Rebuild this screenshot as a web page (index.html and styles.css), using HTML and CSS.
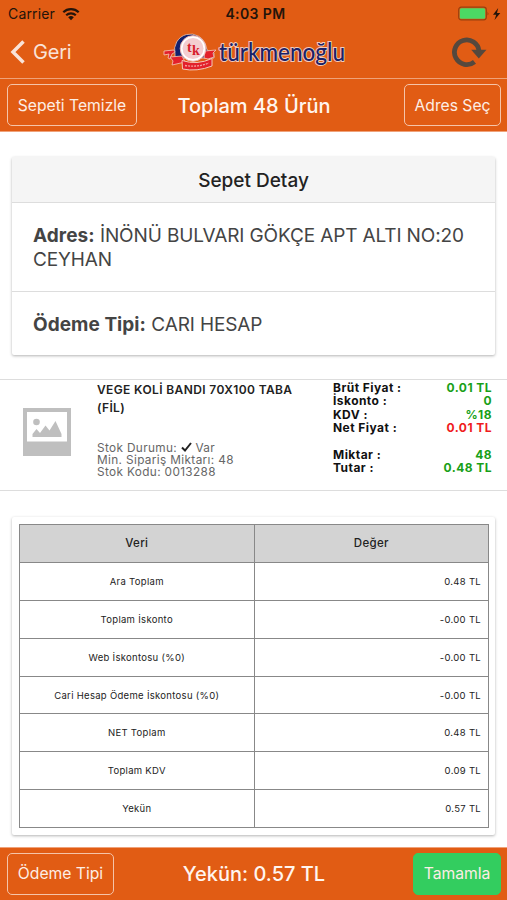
FILE: index.html
```html
<!DOCTYPE html>
<html lang="tr">
<head>
<meta charset="utf-8">
<title>Sepet Detay</title>
<link rel="stylesheet" href="styles.css">
</head>
<body>
<div class="app">
  <header class="header">
    <div class="status">
      <div class="carrier"><span>Carrier</span>
        <svg width="18" height="14" viewBox="0 0 18 14"><g fill="none" stroke="#24140a" stroke-width="2.2"><path d="M1.3 5.2a11 11 0 0 1 15.4 0"/><path d="M4.2 8.3a7 7 0 0 1 9.6 0"/></g><path d="M6.2 10.3a4.1 4.1 0 0 1 5.600 0L9 13.2z" fill="#24140a"/></svg>
      </div>
      <div class="time">4:03 PM</div>
      <div class="power">
        <svg width="44" height="16" viewBox="0 0 44 16"><rect x=".7" y="1.2" width="27.600" height="12.600" rx="2.5" fill="none" stroke="#9a400f" stroke-width="1.2"/><rect x="1.800" y="2.300" width="25.400" height="10.400" rx="1.500" fill="#4cd964"/><path d="M29.5 5.500v4q1.800-2 0-4" fill="#9a400f"/><path d="M40.2 2L35 8.700h3.2L36.5 14 42.300 7h-3.300z" fill="#24140a"/></svg>
      </div>
    </div>
    <nav class="nav">
      <div class="back"><svg width="16" height="24" viewBox="0 0 16 24"><path d="M13.500 1.500L3 12l10.500 10.500" fill="none" stroke="#f9e3d8" stroke-width="3.500"/></svg><span>Geri</span></div>
      <div class="brand">
        <svg class="logo" width="184" height="42" viewBox="0 0 184 42">
          <path d="M12 23a16 16 0 0 1 31-8l1 4 7 3v5H12z" fill="#13216d" stroke="#f2c6ae" stroke-width=".8"/>
          <path d="M1 20l10-1 1 2-3 2-2 5-2-1 1-4-5 1zM42 20l11-1-3 3 1 4-6 2-4-1z" fill="#e3202b" stroke="#f5c8b8" stroke-width=".8"/>
          <path d="M7 26l12-1 3 6-13 3 1-4z" fill="#e3202b" stroke="#f5c8b8" stroke-width=".8"/>
          <circle cx="30" cy="17.500" r="12.800" fill="#fff" stroke="#f0b6b3" stroke-width="1"/>
          <circle cx="30" cy="17.500" r="10.500" fill="#f4cdd0"/>
          <text class="mark" x="24" y="20.500">t</text><text class="mark" x="29" y="23.500">k</text>
          <path d="M19 29.500q15 5 30-2v7.500q-15 6-29.500 3z" fill="#e3202b" stroke="#f5c8b8" stroke-width="1"/>
          <path d="M22 34.500q13 2 24-2.500" fill="none" stroke="#f3a09f" stroke-width="1.300" stroke-dasharray="2 1"/>
          <text class="word" x="56" y="29.500" textLength="126" lengthAdjust="spacingAndGlyphs">türkmenoğlu</text>
        </svg>
      </div>
      <svg class="refresh" width="35" height="32" viewBox="0 0 35 32"><path d="M22.500 25.800A12.300 12.300 0 1 1 27 15" fill="none" stroke="#55483d" stroke-width="4.800"/><path d="M19.200 13.800h15.300L26.800 22.500z" fill="#55483d"/></svg>
    </nav>
    <div class="toolbar">
      <button class="btn clear">Sepeti Temizle</button>
      <h1 class="total">Toplam 48 Ürün</h1>
      <button class="btn address">Adres Seç</button>
    </div>
  </header>
  <main class="content">
    <section class="card detail">
      <h2>Sepet Detay</h2>
      <p class="line addr"><b>Adres:</b> <span>İNÖNÜ BULVARI GÖKÇE APT ALTI NO:20<br>CEYHAN</span></p>
      <p class="line pay"><b>Ödeme Tipi:</b> <span>CARI HESAP</span></p>
    </section>
    <section class="product">
      <svg class="thumb" width="48" height="48" viewBox="0 0 48 48"><path fill="#bfbfbf" fill-rule="evenodd" d="M0 0h48v48H0zM4 4v29.500h40V4z"/><circle cx="13.500" cy="14" r="3.300" fill="#bfbfbf"/><path d="M9.500 29v-3l4-5 3.500 4 5.500-7.500 4 5 6-9.500 6 13v3z" fill="#bfbfbf"/></svg>
      <div class="info">
        <h3>VEGE KOLİ BANDI 70X100 TABA<br>(FİL)</h3>
        <div class="stock">
          <div>Stok Durumu: <svg width="11" height="10" viewBox="0 0 11 10"><path d="M1 5.500l3 3L10 1" fill="none" stroke="#222" stroke-width="2"/></svg> Var</div>
          <div>Min. Sipariş Miktarı: 48</div>
          <div>Stok Kodu: 0013288</div>
        </div>
      </div>
      <dl class="prices">
        <dt>Brüt Fiyat :</dt><dd>0.01 TL</dd>
        <dt>İskonto :</dt><dd>0</dd>
        <dt>KDV :</dt><dd>%18</dd>
        <dt>Net Fiyat :</dt><dd class="net">0.01 TL</dd>
        <dt class="gap">Miktar :</dt><dd class="gap">48</dd>
        <dt>Tutar :</dt><dd>0.48 TL</dd>
      </dl>
    </section>
    <section class="card summary">
      <table>
        <tr><th>Veri</th><th>Değer</th></tr>
        <tr><td>Ara Toplam</td><td>0.48 TL</td></tr>
        <tr><td>Toplam İskonto</td><td>-0.00 TL</td></tr>
        <tr><td>Web İskontosu (%0)</td><td>-0.00 TL</td></tr>
        <tr><td>Cari Hesap Ödeme İskontosu (%0)</td><td>-0.00 TL</td></tr>
        <tr><td>NET Toplam</td><td>0.48 TL</td></tr>
        <tr><td>Toplam KDV</td><td>0.09 TL</td></tr>
        <tr><td>Yekün</td><td>0.57 TL</td></tr>
      </table>
    </section>
  </main>
  <footer class="toolbar footer">
    <button class="btn type">Ödeme Tipi</button>
    <div class="total">Yekün: 0.57 TL</div>
    <button class="btn done">Tamamla</button>
  </footer>
</div>
</body>
</html>
```
FILE: styles.css
```css
* { box-sizing: border-box; }
body { margin: 0; font-family: Inter, "Liberation Sans", sans-serif; background: #fff; }
h1, h2, h3, p, dl, dd { margin: 0; }
svg { display: block; }
.app { width: 507px; height: 900px; display: flex; flex-direction: column; overflow: hidden; }
.header, .footer { background: #e15c14; color: #fdeee5; }
.status { height: 28px; padding: 0 5px 1px 8px; display: grid; grid-template-columns: 1fr auto 1fr; align-items: center; color: #24140a; font-size: 14px; }
.carrier { display: flex; align-items: center; gap: 7px; letter-spacing: .15px; }
.time { font-weight: 600; letter-spacing: .4px; padding-left: 1px; }
.power { justify-self: end; }
.nav { height: 51px; padding: 0 20px 2px 10px; display: grid; grid-template-columns: 1fr 184px 1fr; align-items: center; border-bottom: 1px solid #efa27a; }
.back { display: flex; align-items: center; gap: 7px; font-size: 20px; letter-spacing: -.2px; color: #f9e3d8; }
.brand { padding-left: 6px; }
.logo { overflow: visible; }
.mark { font: bold 14px "Liberation Serif", serif; fill: #d7202c; }
.word { font: 500 24px Lato, "Liberation Sans", sans-serif; fill: #1b2168; stroke: #f0cbbb; stroke-width: 2px; paint-order: stroke; }
.refresh { justify-self: end; }
.toolbar { height: 53px; padding: 0 6px 0 7px; display: grid; grid-template-columns: 1fr auto 1fr; align-items: center; border-bottom: 1px solid #efa27a; }
.btn { height: 42px; padding: 0; font: 15.7px Inter, sans-serif; color: #fdeee5; background: transparent; border: 1.5px solid #f5c4a9; border-radius: 5px; white-space: nowrap; }
.header .btn { padding-top: 1px; }
.footer .btn { padding-bottom: 1px; }
.btn:last-child { justify-self: end; }
.clear { width: 130px; }
.address { width: 97px; }
.type { width: 107px; }
.done { width: 88px; background: #33cd5f; border-color: #33cd5f; }
.total { font-size: 20px; line-height: 24px; padding-top: 2px; font-weight: 500; color: #fff5ef; }
.footer .total { padding-top: 0; }
.content { flex: 1; padding-top: 25px; }
.card { margin: 0 12px; border-radius: 2px; box-shadow: 0 1px 3px rgba(0,0,0,.3); }
.detail { height: 198px; }
.detail h2 { height: 46px; line-height: 47px; text-align: center; font-size: 19px; font-weight: 500; color: #222; background: #f5f5f5; border-bottom: 1px solid #ddd; }
.line { padding: 0 21px; font-size: 19px; line-height: 24px; color: #444; white-space: nowrap; }
.line b { font-weight: 700; letter-spacing: .05px; }
.line span { letter-spacing: -.13px; }
.addr { height: 89px; padding-top: 21px; border-bottom: 1px solid #ddd; }
.pay { padding-top: 21px; }
.product { height: 112px; margin-top: 24px; display: flex; border-top: 1px solid #ddd; border-bottom: 1px solid #ddd; }
.thumb { flex: none; margin: 28px 26px 0 23px; }
.info { width: 236px; }
.info h3 { font-size: 12px; line-height: 18px; font-weight: 600; letter-spacing: .37px; color: #222; padding-top: 1px; white-space: nowrap; }
.stock { margin-top: 25px; font-size: 11.8px; line-height: 12.2px; color: #666; letter-spacing: .36px; }
.stock svg { display: inline-block; }
.prices { width: 159px; padding-top: 1px; display: grid; grid-template-columns: 1fr auto; grid-auto-rows: max-content; font-size: 12px; line-height: 13.4px; font-weight: 700; color: #111; letter-spacing: .45px; }
.prices dd { text-align: right; color: #189f18; }
.prices .net { color: #ef1b20; }
.prices .gap { padding-top: 13.4px; }
.summary { margin-top: 26px; height: 318px; padding: 7px 6px 0 7px; }
table { width: 470px; border-collapse: collapse; table-layout: fixed; color: #222; letter-spacing: .3px; }
tr { height: 37.9px; }
th, td { height: 37.9px; padding: 0 7px; border: 1px solid #888; font-size: 9.5px; text-align: center; }
th { background: #d3d3d3; font-size: 11.5px; font-weight: 500; }
td + td { text-align: right; }
.footer { border-top: 1px solid #efa27a; border-bottom: 0; }
```
